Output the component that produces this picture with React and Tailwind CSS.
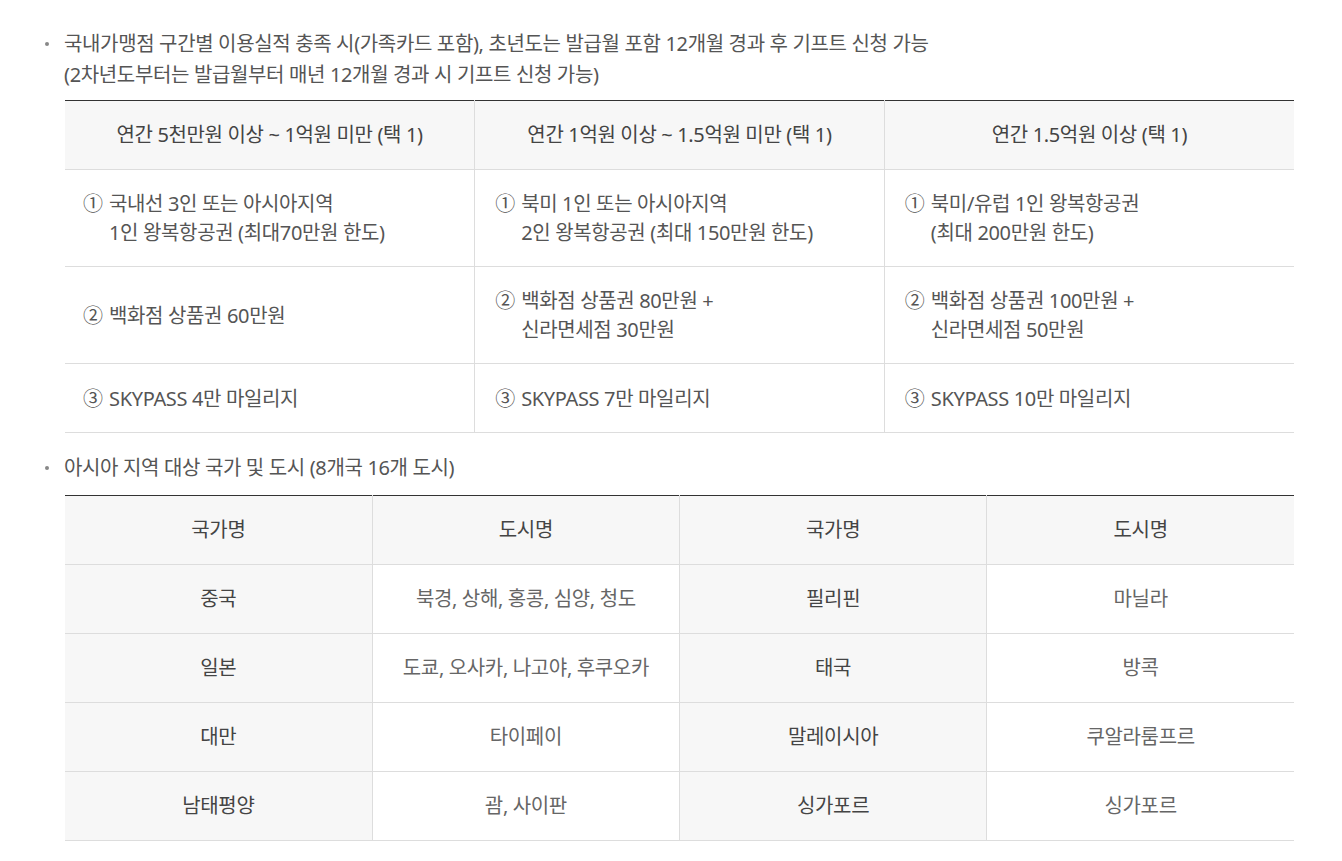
import React from "react";

const giftHead = [
  "연간 5천만원 이상 ~ 1억원 미만 (택 1)",
  "연간 1억원 이상 ~ 1.5억원 미만 (택 1)",
  "연간 1.5억원 이상 (택 1)",
];

const giftRows = [
  [
    ["①", "국내선 3인 또는 아시아지역", "1인 왕복항공권 (최대70만원 한도)"],
    ["①", "북미 1인 또는 아시아지역", "2인 왕복항공권 (최대 150만원 한도)"],
    ["①", "북미/유럽 1인 왕복항공권", "(최대 200만원 한도)"],
  ],
  [
    ["②", "백화점 상품권 60만원"],
    ["②", "백화점 상품권 80만원 +", "신라면세점 30만원"],
    ["②", "백화점 상품권 100만원 +", "신라면세점 50만원"],
  ],
  [
    ["③", "SKYPASS 4만 마일리지"],
    ["③", "SKYPASS 7만 마일리지"],
    ["③", "SKYPASS 10만 마일리지"],
  ],
];

const cities = [
  ["중국", "북경, 상해, 홍콩, 심양, 청도", "필리핀", "마닐라"],
  ["일본", "도쿄, 오사카, 나고야, 후쿠오카", "태국", "방콕"],
  ["대만", "타이페이", "말레이시아", "쿠알라룸프르"],
  ["남태평양", "괌, 사이판", "싱가포르", "싱가포르"],
];

function Bullet({ children }) {
  return (
    <div className="flex text-[20px] leading-[31px] text-[#555]">
      <div className="w-[19px] shrink-0 flex justify-start pt-[14px]">
        <span className="block w-[4px] h-[4px] rounded-full bg-[#888]" />
      </div>
      <div>{children}</div>
    </div>
  );
}

export default function App() {
  return (
    <div
      className="bg-white min-h-screen pt-[28px] pl-[45px] tracking-[-0.35px]"
      style={{ fontFamily: '"Noto Sans", "Noto Sans CJK KR", sans-serif' }}
    >
      <Bullet>
        국내가맹점 구간별 이용실적 충족 시(가족카드 포함), 초년도는 발급월 포함 12개월 경과 후 기프트 신청 가능
        <br />
        (2차년도부터는 발급월부터 매년 12개월 경과 시 기프트 신청 가능)
      </Bullet>

      <table className="ml-[20px] mt-[10px] w-[1229px] table-fixed border-collapse border-t border-t-[#333] text-[20px]">
        <thead>
          <tr className="bg-[#f7f7f7]">
            {giftHead.map((h, i) => (
              <th
                key={h}
                className={`h-[69px] font-normal text-[#444] text-center border-b border-[#ddd] ${
                  i > 0 ? "border-l" : ""
                }`}
              >
                {h}
              </th>
            ))}
          </tr>
        </thead>
        <tbody>
          {giftRows.map((row, r) => (
            <tr key={r}>
              {row.map((cell, i) => (
                <td
                  key={i}
                  className={`align-middle py-[19px] pl-[18px] pr-4 border-b border-[#ddd] text-[#555] leading-[29px] ${
                    i > 0 ? "border-l pl-[20px]" : ""
                  } ${r === 2 ? "h-[69px]" : "h-[97px]"}`}
                >
                  <div className="flex">
                    <span className="w-[26px] shrink-0">{cell[0]}</span>
                    <span>
                      {cell[1]}
                      {cell[2] ? (
                        <>
                          <br />
                          {cell[2]}
                        </>
                      ) : null}
                    </span>
                  </div>
                </td>
              ))}
            </tr>
          ))}
        </tbody>
      </table>

      <div className="mt-[19px]">
        <Bullet>아시아 지역 대상 국가 및 도시 (8개국 16개 도시)</Bullet>
      </div>

      <table className="ml-[20px] mt-[12px] w-[1229px] table-fixed border-collapse border-t border-t-[#333] text-[20px]">
        <thead>
          <tr className="bg-[#f7f7f7]">
            {["국가명", "도시명", "국가명", "도시명"].map((h, i) => (
              <th
                key={i}
                className={`h-[69px] font-normal text-[#444] text-center border-b border-[#ddd] ${
                  i > 0 ? "border-l" : ""
                }`}
              >
                {h}
              </th>
            ))}
          </tr>
        </thead>
        <tbody>
          {cities.map((row, r) => (
            <tr key={r}>
              {row.map((c, i) => (
                <td
                  key={i}
                  className={`h-[69px] text-center border-b border-[#ddd] ${
                    i > 0 ? "border-l" : ""
                  } ${i % 2 === 0 ? "bg-[#f7f7f7] text-[#444]" : "bg-white text-[#666]"}`}
                >
                  {c}
                </td>
              ))}
            </tr>
          ))}
        </tbody>
      </table>
    </div>
  );
}
